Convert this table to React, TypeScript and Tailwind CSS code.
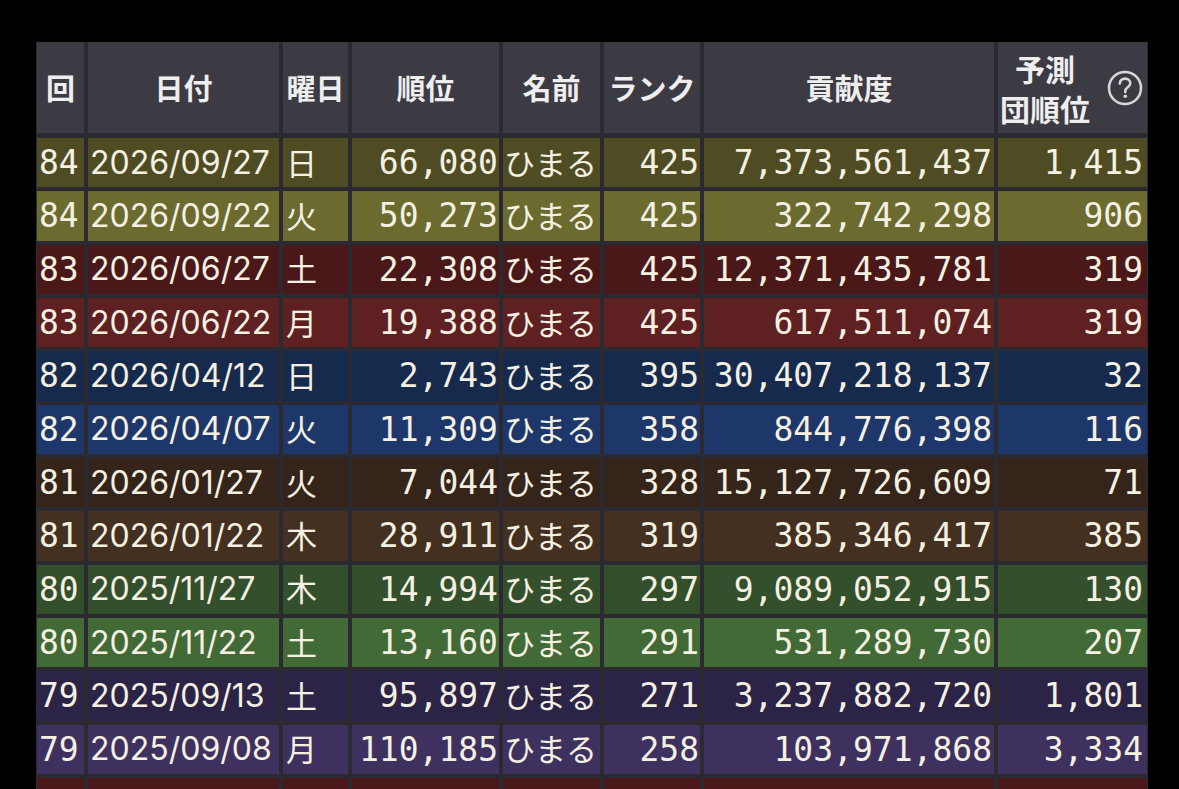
const cols = "grid grid-cols-[47px_191px_65px_147px_97px_96px_290px_149px] gap-x-[4px]";

const mono = "font-['DejaVu_Sans_Mono',monospace] text-[33px]";
const sans = "font-['Inter','Noto_Sans_CJK_JP',sans-serif] text-[32px]";
const cjk = "font-['Noto_Sans_CJK_JP',sans-serif] text-[31px] pb-[3px]";

type Row = {
  n: string;
  date: string;
  day: string;
  rank: string;
  name: string;
  lv: string;
  contrib: string;
  team: string;
  bg: string;
};

const rows: Row[] = [
  { n: "84", date: "2026/09/27", day: "日", rank: "66,080", name: "ひまる", lv: "425", contrib: "7,373,561,437", team: "1,415", bg: "bg-[#4f4c24]" },
  { n: "84", date: "2026/09/22", day: "火", rank: "50,273", name: "ひまる", lv: "425", contrib: "322,742,298", team: "906", bg: "bg-[#6b6a2f]" },
  { n: "83", date: "2026/06/27", day: "土", rank: "22,308", name: "ひまる", lv: "425", contrib: "12,371,435,781", team: "319", bg: "bg-[#4b1819]" },
  { n: "83", date: "2026/06/22", day: "月", rank: "19,388", name: "ひまる", lv: "425", contrib: "617,511,074", team: "319", bg: "bg-[#5f2021]" },
  { n: "82", date: "2026/04/12", day: "日", rank: "2,743", name: "ひまる", lv: "395", contrib: "30,407,218,137", team: "32", bg: "bg-[#162a4e]" },
  { n: "82", date: "2026/04/07", day: "火", rank: "11,309", name: "ひまる", lv: "358", contrib: "844,776,398", team: "116", bg: "bg-[#1d376a]" },
  { n: "81", date: "2026/01/27", day: "火", rank: "7,044", name: "ひまる", lv: "328", contrib: "15,127,726,609", team: "71", bg: "bg-[#34241a]" },
  { n: "81", date: "2026/01/22", day: "木", rank: "28,911", name: "ひまる", lv: "319", contrib: "385,346,417", team: "385", bg: "bg-[#433020]" },
  { n: "80", date: "2025/11/27", day: "木", rank: "14,994", name: "ひまる", lv: "297", contrib: "9,089,052,915", team: "130", bg: "bg-[#334f2b]" },
  { n: "80", date: "2025/11/22", day: "土", rank: "13,160", name: "ひまる", lv: "291", contrib: "531,289,730", team: "207", bg: "bg-[#426a36]" },
  { n: "79", date: "2025/09/13", day: "土", rank: "95,897", name: "ひまる", lv: "271", contrib: "3,237,882,720", team: "1,801", bg: "bg-[#2c2447]" },
  { n: "79", date: "2025/09/08", day: "月", rank: "110,185", name: "ひまる", lv: "258", contrib: "103,971,868", team: "3,334", bg: "bg-[#3e315f]" },
  { n: "78", date: "2025/06/27", day: "火", rank: "42,510", name: "ひまる", lv: "251", contrib: "2,904,118,362", team: "412", bg: "bg-[#4b1819]" },
];

function HelpIcon() {
  return (
    <svg width="36" height="36" viewBox="0 0 36 36" className="shrink-0">
      <circle cx="18" cy="18" r="16" fill="none" stroke="#d8d8d8" strokeWidth="2.5" />
      <path d="M12.8 13.6c0-3 2.3-5 5.3-5s5.2 1.9 5.2 4.6c0 2.1-1.2 3.2-2.8 4.3-1.4 1-2.2 1.7-2.2 3.5v.9" fill="none" stroke="#d8d8d8" strokeWidth="2.6" strokeLinecap="round" />
      <circle cx="18.3" cy="26.2" r="1.8" fill="#d8d8d8" />
    </svg>
  );
}

export default function App() {
  const th = "bg-[#3c3b44] flex items-center justify-center text-[#eeeeee] font-bold font-['Noto_Sans_CJK_JP',sans-serif] text-[29px] leading-none";
  return (
    <div className="h-[789px] w-[1179px] overflow-hidden bg-black pt-[42px] pl-[36px]">
      <div className="w-[1112px] bg-[#2a2a30] px-[1px]">
        <div className={`${cols} h-[91px]`}>
          <div className={th}>回</div>
          <div className={th}>日付</div>
          <div className={th}>曜日</div>
          <div className={th}>順位</div>
          <div className={th}>名前</div>
          <div className={th}>ランク</div>
          <div className={th}>貢献度</div>
          <div className="bg-[#3c3b44] flex items-center justify-between pl-[2px] pr-[4px] text-[#eeeeee] font-bold font-['Noto_Sans_CJK_JP',sans-serif] text-[30px] leading-[40px]">
            <div className="text-center">
              <div>予測</div>
              <div>団順位</div>
            </div>
            <HelpIcon />
          </div>
        </div>
        <div className="mt-[5px] flex flex-col gap-y-[4px]">
          {rows.map((r, i) => (
            <div key={i} className={`${cols} h-[49.33px] text-[#f4f0e2] leading-none`}>
              <div className={`${r.bg} ${mono} flex items-center pl-[2px]`}>{r.n}</div>
              <div className={`${r.bg} ${sans} flex items-center pl-[2px]`}>{r.date}</div>
              <div className={`${r.bg} ${cjk} flex items-center pl-[3px]`}>{r.day}</div>
              <div className={`${r.bg} ${mono} flex items-center justify-end pr-[1px]`}>{r.rank}</div>
              <div className={`${r.bg} ${cjk} flex items-center pl-[1px]`}>{r.name}</div>
              <div className={`${r.bg} ${mono} flex items-center justify-end pr-[1px]`}>{r.lv}</div>
              <div className={`${r.bg} ${mono} flex items-center justify-end pr-[2px]`}>{r.contrib}</div>
              <div className={`${r.bg} ${mono} flex items-center justify-end pr-[4px]`}>{r.team}</div>
            </div>
          ))}
        </div>
      </div>
    </div>
  );
}
